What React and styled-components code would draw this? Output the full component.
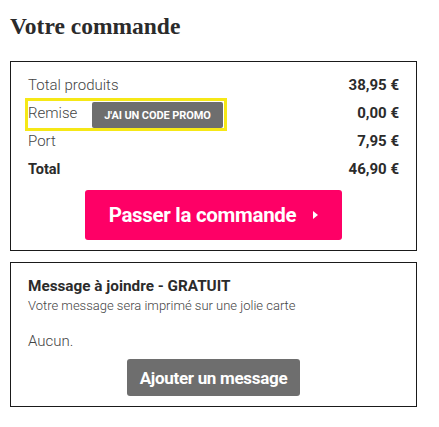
import React from "react";
import styled, { createGlobalStyle } from "styled-components";

const Global = createGlobalStyle`
  html, body { margin: 0; padding: 0; background: #fff; }
  body { font-family: Roboto, "Liberation Sans", Arial, sans-serif; color: #333; }
`;

const Page = styled.div`
  padding: 10px 22px 0 10px;
  width: 407px;
`;

const Title = styled.h1`
  margin: 0 0 19px 0;
  font-family: "Liberation Serif", "Times New Roman", serif;
  font-weight: 700;
  font-size: 23.5px;
  line-height: 32px;
  color: #2b2b2b;
`;

const Card = styled.section`
  border: 1px solid #1a1a1a;
  padding: ${(p) => p.$pad};
  display: flex;
  flex-direction: column;
  & + & { margin-top: 11px; }
`;

const Row = styled.div`
  display: flex;
  align-items: center;
  justify-content: space-between;
  height: 28px;
  font-size: 15px;
`;

const Label = styled.span`
  font-weight: ${(p) => (p.$bold ? 700 : 300)};
  color: ${(p) => (p.$bold ? "#2b2b2b" : "#444")};
  font-size: ${(p) => (p.$bold ? "14.5px" : "15px")};
`;

const Value = styled.span`
  font-weight: 700;
  color: #2b2b2b;
  font-size: 15px;
`;

const PromoFrame = styled.div`
  display: flex;
  align-items: center;
  margin-top: 3px;
  margin-left: -3px;
  border: 3px solid #f6e816;
  padding: 1px 1px 0 0;
  box-sizing: border-box;
  height: 33px;
`;

const PromoLabel = styled.span`
  font-weight: 300;
  color: #444;
  font-size: 15px;
  width: 64px;
  margin-top: -4px;
`;

const PromoButton = styled.button`
  border: none;
  border-radius: 2px;
  background: #6e6e6e;
  color: #fff;
  font-family: Roboto, "Liberation Sans", Arial, sans-serif;
  font-weight: 700;
  font-size: 11px;
  height: 26px;
  width: 131px;
  padding: 0;
  letter-spacing: -0.1px;
`;

const CtaButton = styled.button`
  align-self: center;
  border: none;
  border-radius: 3px;
  background: ${(p) => p.$bg};
  color: #fff;
  font-family: Roboto, "Liberation Sans", Arial, sans-serif;
  font-weight: 700;
  font-size: ${(p) => p.$size};
  width: ${(p) => p.$w};
  height: ${(p) => p.$h};
  margin-top: ${(p) => p.$mt};
  display: flex;
  align-items: center;
  justify-content: center;
  padding: 0;
  letter-spacing: -0.3px;
`;

const Caret = styled.span`
  width: 0;
  height: 0;
  border-top: 4px solid transparent;
  border-bottom: 4px solid transparent;
  border-left: 5px solid #fff;
  margin-left: 17px;
`;

const MsgTitle = styled.h2`
  margin: 0;
  font-size: 15.3px;
  font-weight: 700;
  color: #2b2b2b;
  line-height: 20px;
`;

const MsgSub = styled.p`
  margin: 0;
  font-size: 13px;
  font-weight: 300;
  color: #444;
  line-height: 20px;
`;

const MsgNone = styled.p`
  margin: 16px 0 0 0;
  font-size: 15px;
  font-weight: 300;
  color: #444;
  line-height: 18px;
`;

export default function App() {
  return (
    <>
      <Global />
      <Page>
        <Title>Votre commande</Title>
        <Card $pad="9px 17px 10px 17px">
          <Row>
            <Label>Total produits</Label>
            <Value>38,95 €</Value>
          </Row>
          <Row>
            <PromoFrame>
              <PromoLabel>Remise</PromoLabel>
              <PromoButton>J'AI UN CODE PROMO</PromoButton>
            </PromoFrame>
            <Value>0,00 €</Value>
          </Row>
          <Row>
            <Label>Port</Label>
            <Value>7,95 €</Value>
          </Row>
          <Row>
            <Label $bold>Total</Label>
            <Value>46,90 €</Value>
          </Row>
          <CtaButton $bg="#fe0066" $size="20.5px" $w="257px" $h="50px" $mt="7px">
            Passer la commande <Caret />
          </CtaButton>
        </Card>
        <Card $pad="13px 17px 10px 17px">
          <MsgTitle>Message à joindre - GRATUIT</MsgTitle>
          <MsgSub>Votre message sera imprimé sur une jolie carte</MsgSub>
          <MsgNone>Aucun.</MsgNone>
          <CtaButton $bg="#6e6e6e" $size="17px" $w="173px" $h="37px" $mt="9px">
            Ajouter un message
          </CtaButton>
        </Card>
      </Page>
    </>
  );
}
